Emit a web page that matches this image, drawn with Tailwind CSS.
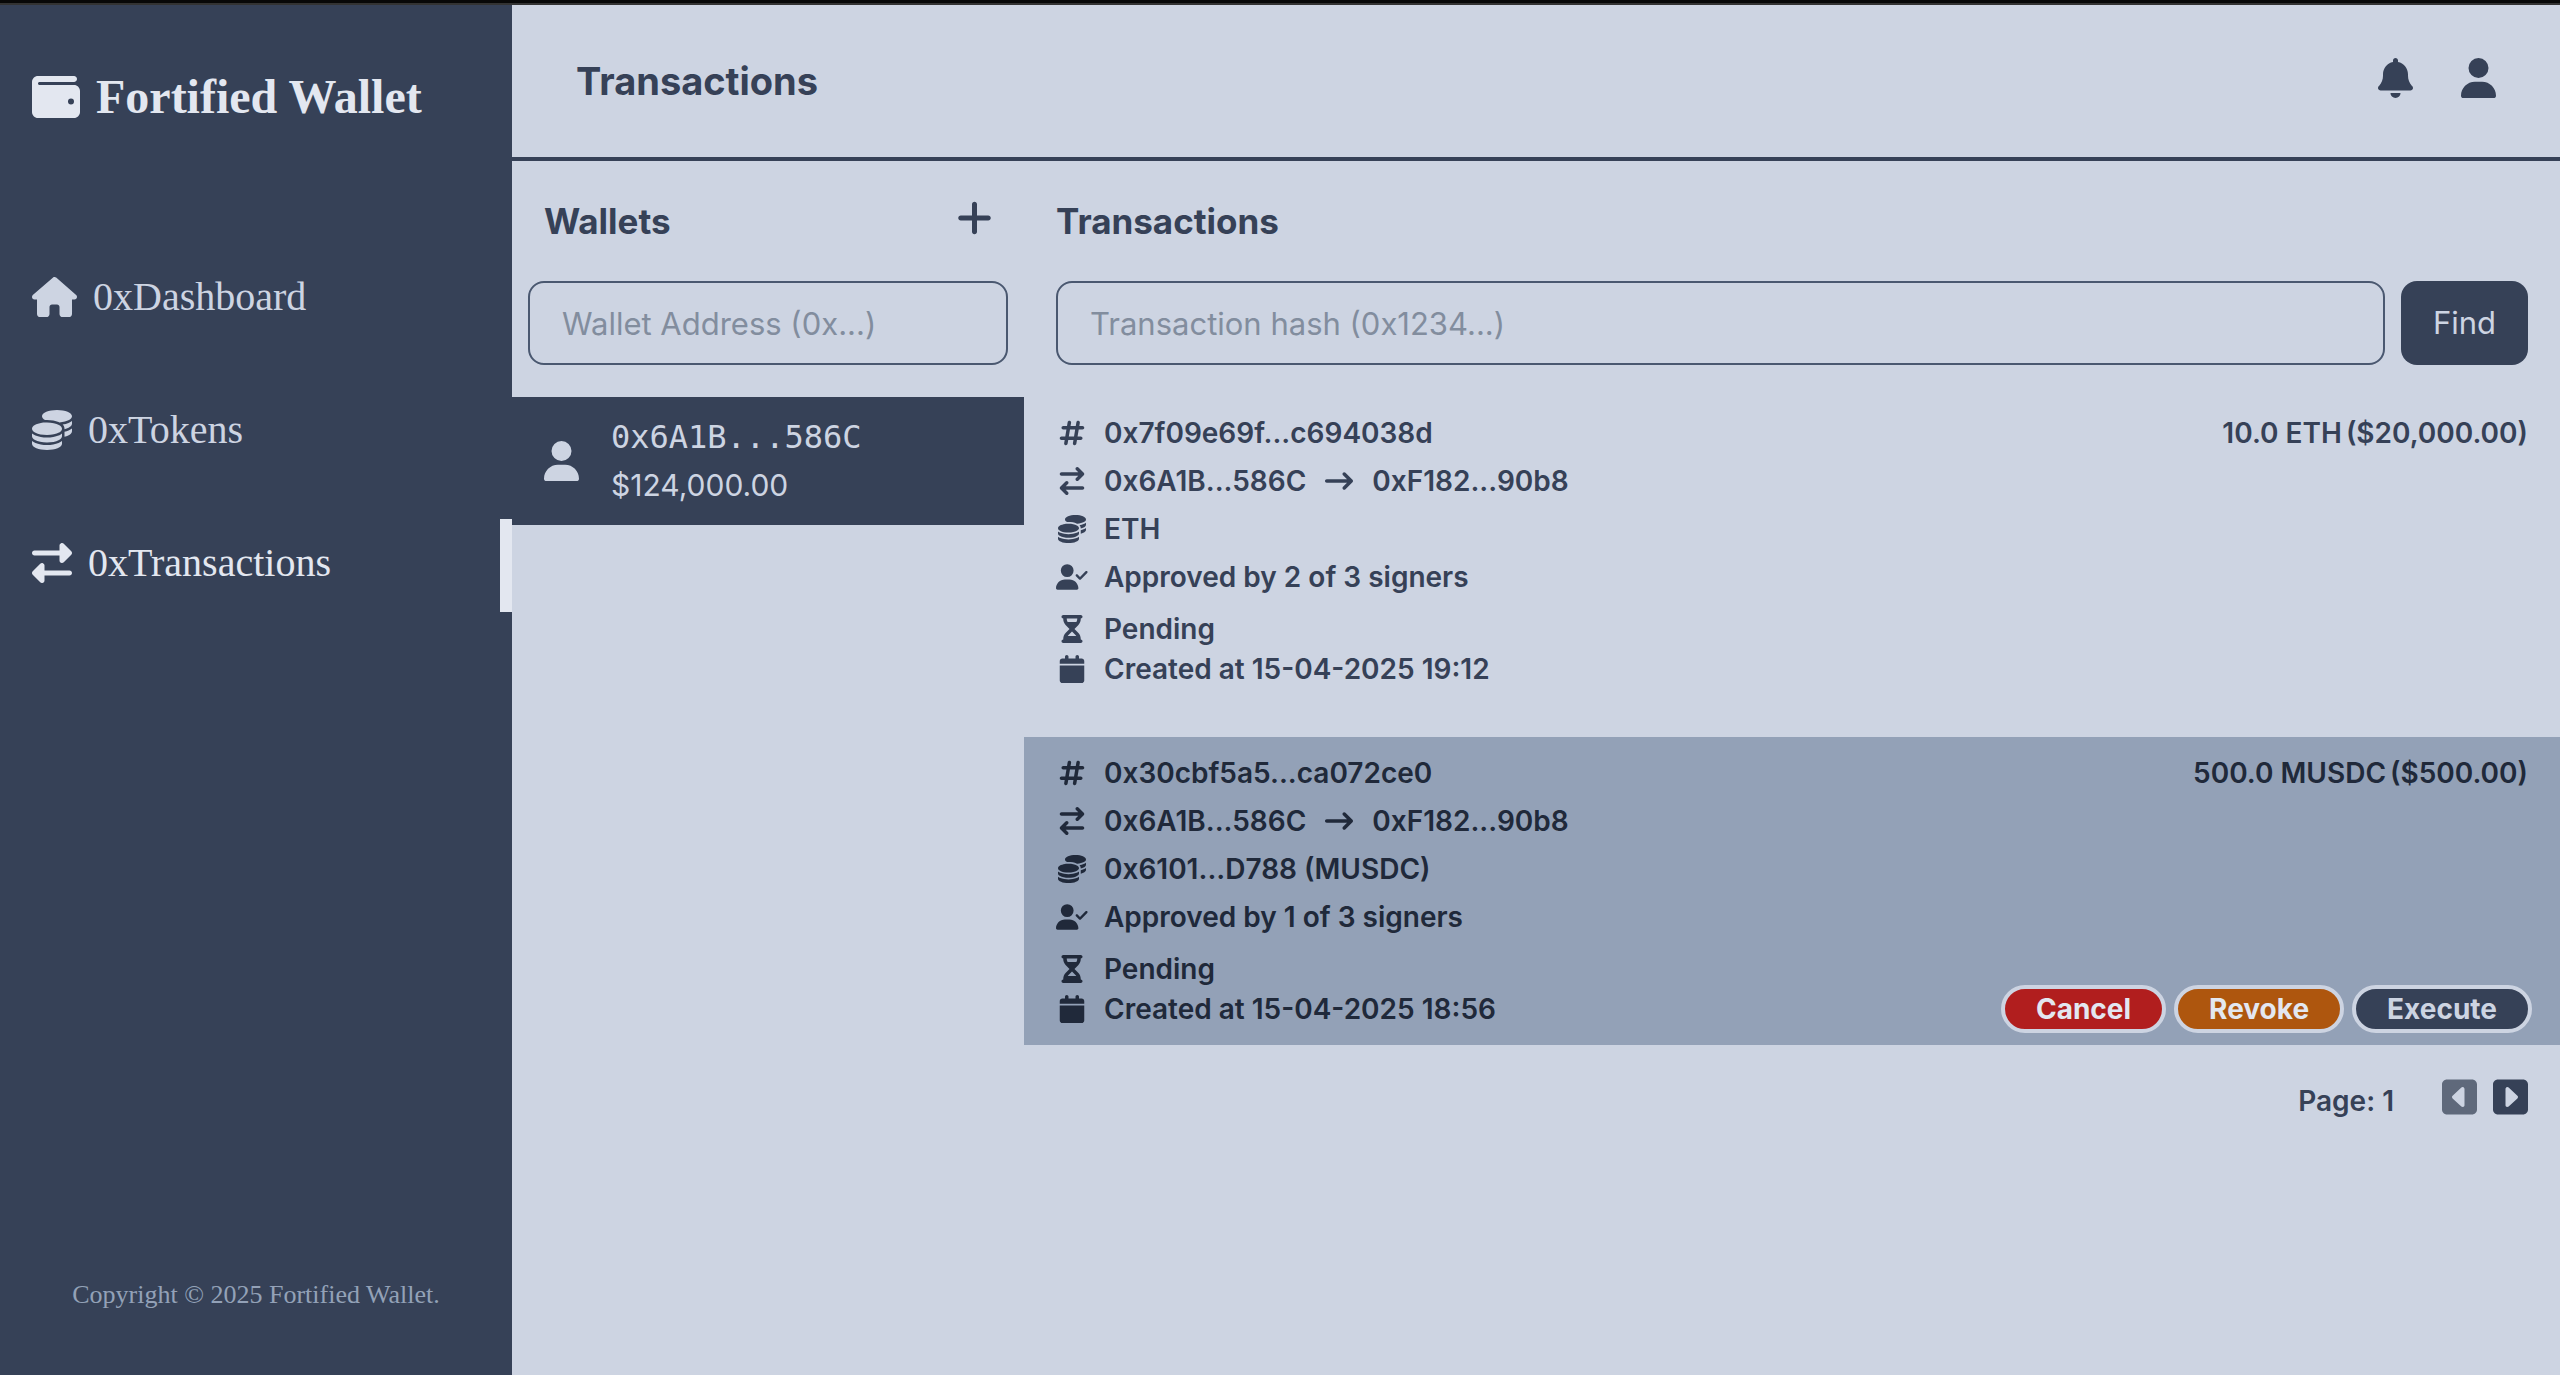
<!DOCTYPE html>
<html lang="en">
<head>
<meta charset="utf-8">
<meta name="viewport" content="width=device-width, initial-scale=1">
<title>Fortified Wallet</title>
<script src="https://cdn.jsdelivr.net/npm/@tailwindcss/browser@4"></script>
</head>
<body class="flex min-h-screen flex-col bg-[#cdd4e2] font-['Inter',sans-serif] text-[#364157]">

<svg class="hidden" aria-hidden="true">
  <symbol id="wallet" viewBox="0 0 512 512"><path d="M64 32C28.7 32 0 60.7 0 96V416c0 35.3 28.7 64 64 64H448c35.3 0 64-28.7 64-64V192c0-35.3-28.7-64-64-64H80c-8.8 0-16-7.2-16-16s7.2-16 16-16H448c17.7 0 32-14.3 32-32s-14.3-32-32-32H64zM416 272a32 32 0 1 1 0 64 32 32 0 1 1 0-64z"/></symbol>
  <symbol id="house" viewBox="0 0 576 512"><path d="M575.8 255.5c0 18-15 32.1-32 32.1h-32l.7 160.2c0 2.7-.2 5.4-.5 8.1V472c0 22.1-17.9 40-40 40H456c-1.1 0-2.2 0-3.3-.1c-1.4 .1-2.8 .1-4.2 .1H416 392c-22.1 0-40-17.9-40-40V448 384c0-17.7-14.3-32-32-32H256c-17.7 0-32 14.3-32 32v64 24c0 22.1-17.9 40-40 40H160 128.1c-1.5 0-3-.1-4.5-.2c-1.2 .1-2.4 .2-3.6 .2H104c-22.1 0-40-17.9-40-40V360c0-.9 0-1.9 .1-2.8V287.6H32c-18 0-32-14-32-32.1c0-9 3-17 10-24L266.4 8c7-7 15-8 22-8s15 2 21 7L564.8 231.5c8 7 12 15 11 24z"/></symbol>
  <symbol id="coins" viewBox="0 0 512 512"><path d="M512 80c0 18-14.3 34.6-38.4 48c-29.1 16.1-72.5 27.5-122.3 30.9c-3.7-1.8-7.4-3.5-11.3-5C300.6 137.4 248.2 128 192 128c-8.3 0-16.4 .2-24.5 .6l-1.1-.6C142.3 114.6 128 98 128 80c0-44.2 86-80 192-80S512 35.8 512 80zM160.7 161.1c10.2-.7 20.7-1.1 31.3-1.1c62.2 0 117.4 12.3 152.5 31.4C369.3 204.9 384 221.7 384 240c0 4-.7 7.9-2.1 11.7c-4.6 13.2-17 25.3-35 35.5c-.1 .1-.3 .1-.4 .2c-.3 .2-.6 .3-.9 .5c-35 19.4-90.8 32-153.6 32c-59.6 0-112.9-11.3-148.2-29.1c-1.9-.9-3.7-1.9-5.5-2.9C14.3 274.6 0 258 0 240c0-34.8 53.4-64.5 128-75.4c10.5-1.5 21.4-2.7 32.7-3.5zM416 240c0-21.9-10.6-39.9-24.1-53.4c28.3-4.4 54.2-11.4 76.2-20.5c16.3-6.8 31.5-15.2 43.9-25.5V176c0 19.3-16.5 37.1-43.8 50.9c-14.6 7.4-32.4 13.7-52.4 18.5c.1-1.8 .2-3.5 .2-5.3zm-32 96c0 18-14.3 34.6-38.4 48c-1.8 1-3.6 1.9-5.5 2.9C304.9 404.7 251.6 416 192 416c-62.8 0-118.6-12.6-153.6-32C14.3 370.6 0 354 0 336V300.6c12.5 10.3 27.6 18.7 43.9 25.5C83.4 342.6 135.8 352 192 352s108.6-9.4 148.1-25.9c7.8-3.2 15.3-6.9 22.4-10.9c6.1-3.4 11.8-7.2 17.2-11.2c1.5-1.1 2.9-2.3 4.3-3.4V304v5.7V336zm32 0V304 278.1c19-4.2 36.5-9.5 52.1-16c16.3-6.8 31.5-15.2 43.9-25.5V272c0 10.5-5 21-14.9 30.9c-16.3 16.3-45 29.7-81.3 38.4c.1-1.7 .2-3.5 .2-5.3zM192 448c56.2 0 108.6-9.4 148.1-25.9c16.3-6.8 31.5-15.2 43.9-25.5V432c0 44.2-86 80-192 80S0 476.2 0 432V396.6c12.5 10.3 27.6 18.7 43.9 25.5C83.4 438.6 135.8 448 192 448z"/></symbol>
  <symbol id="right-left" viewBox="0 0 512 512"><path d="M32 96l320 0V32c0-12.9 7.8-24.6 19.8-29.6s25.7-2.2 34.9 6.9l96 96c6 6 9.4 14.1 9.4 22.6s-3.4 16.6-9.4 22.6l-96 96c-9.2 9.2-22.9 11.9-34.9 6.9s-19.8-16.6-19.8-29.6V160L32 160c-17.7 0-32-14.3-32-32s14.3-32 32-32zM480 352c17.7 0 32 14.3 32 32s-14.3 32-32 32H160v64c0 12.9-7.8 24.6-19.8 29.6s-25.7 2.2-34.9-6.9l-96-96c-6-6-9.4-14.1-9.4-22.6s3.4-16.6 9.4-22.6l96-96c9.2-9.2 22.9-11.9 34.9-6.9s19.8 16.6 19.8 29.6l0 64H480z"/></symbol>
  <symbol id="swap" viewBox="0 0 448 512"><path d="M438.6 150.6c12.5-12.5 12.5-32.8 0-45.3l-96-96c-12.5-12.5-32.8-12.5-45.3 0s-12.5 32.8 0 45.3L338.7 96 32 96C14.3 96 0 110.3 0 128s14.3 32 32 32l306.7 0-41.4 41.4c-12.5 12.5-12.5 32.8 0 45.3s32.8 12.5 45.3 0l96-96zm-333.3 352c12.5 12.5 32.8 12.5 45.3 0s12.5-32.8 0-45.3L109.3 416 416 416c17.7 0 32-14.3 32-32s-14.3-32-32-32l-306.7 0 41.4-41.4c12.5-12.5 12.5-32.8 0-45.3s-32.8-12.5-45.3 0l-96 96c-12.5 12.5-12.5 32.8 0 45.3l96 96z"/></symbol>
  <symbol id="hash" viewBox="0 0 448 512"><path d="M181.3 32.4c17.4 2.9 29.2 19.4 26.3 36.8L197.8 128h95.1l11.5-69.3c2.9-17.4 19.4-29.2 36.8-26.3s29.2 19.4 26.3 36.8L357.8 128H416c17.7 0 32 14.3 32 32s-14.3 32-32 32H347.1L325.8 320H384c17.7 0 32 14.3 32 32s-14.3 32-32 32H315.1l-11.5 69.3c-2.9 17.4-19.4 29.2-36.8 26.3s-29.2-19.4-26.3-36.8l9.8-58.7H155.1l-11.5 69.3c-2.9 17.4-19.4 29.2-36.8 26.3s-29.2-19.4-26.3-36.8L90.2 384H32c-17.7 0-32-14.3-32-32s14.3-32 32-32h68.9l21.3-128H64c-17.7 0-32-14.3-32-32s14.3-32 32-32h68.9l11.5-69.3c2.9-17.4 19.4-29.2 36.8-26.3zM187.1 192L165.8 320h95.1l21.3-128H187.1z"/></symbol>
  <symbol id="plus" viewBox="0 0 448 512"><path d="M256 80c0-17.7-14.3-32-32-32s-32 14.3-32 32V224H48c-17.7 0-32 14.3-32 32s14.3 32 32 32H192V432c0 17.7 14.3 32 32 32s32-14.3 32-32V288H400c17.7 0 32-14.3 32-32s-14.3-32-32-32H256V80z"/></symbol>
  <symbol id="bell" viewBox="0 0 448 512"><path d="M224 0c-17.7 0-32 14.3-32 32V51.2C119 66 64 130.6 64 208v18.8c0 47-17.3 92.4-48.5 127.6l-7.4 8.3c-8.4 9.4-10.4 22.9-5.3 34.4S19.4 416 32 416H416c12.6 0 24-7.4 29.2-18.9s3.1-25-5.3-34.4l-7.4-8.3C401.3 319.2 384 273.9 384 226.8V208c0-77.4-55-142-128-156.8V32c0-17.7-14.3-32-32-32zm45.3 493.3c12-12 18.7-28.3 18.7-45.3H224 160c0 17 6.7 33.3 18.7 45.3s28.3 18.7 45.3 18.7s33.3-6.7 45.3-18.7z"/></symbol>
  <symbol id="user" viewBox="0 0 448 512"><path d="M224 256A128 128 0 1 0 224 0a128 128 0 1 0 0 256zm-45.7 48C79.8 304 0 383.8 0 482.3C0 498.7 13.3 512 29.7 512H418.3c16.4 0 29.7-13.3 29.7-29.7C448 383.8 368.2 304 269.7 304H178.3z"/></symbol>
  <symbol id="user-check" viewBox="0 0 640 512"><path d="M96 128a128 128 0 1 1 256 0A128 128 0 1 1 96 128zM0 482.3C0 383.8 79.8 304 178.3 304h91.4C368.2 304 448 383.8 448 482.3c0 16.4-13.3 29.7-29.7 29.7H29.7C13.3 512 0 498.7 0 482.3zM625 177L497 305c-9.4 9.4-24.6 9.4-33.9 0l-64-64c-9.4-9.4-9.4-24.6 0-33.9s24.6-9.4 33.9 0l47 47L591 143c9.4-9.4 24.6-9.4 33.9 0s9.4 24.6 0 33.9z"/></symbol>
  <symbol id="hourglass" viewBox="0 0 384 512"><path d="M32 0C14.3 0 0 14.3 0 32S14.3 64 32 64V75c0 42.4 16.9 83.1 46.9 113.1L146.7 256 78.9 323.9C48.9 353.9 32 394.6 32 437v11c-17.7 0-32 14.3-32 32s14.3 32 32 32H64 320h32c17.7 0 32-14.3 32-32s-14.3-32-32-32V437c0-42.4-16.9-83.1-46.9-113.1L237.3 256l67.9-67.9c30-30 46.9-70.7 46.9-113.1V64c17.7 0 32-14.3 32-32s-14.3-32-32-32H320 64 32zM96 75V64H288V75c0 19-5.6 37.4-16 53H112c-10.3-15.6-16-34-16-53zm16 309c3.5-5.3 7.6-10.3 12.1-14.9L192 301.3l67.9 67.9c4.6 4.6 8.6 9.6 12.1 14.9H112z"/></symbol>
  <symbol id="calendar" viewBox="0 0 448 512"><path d="M96 32V64H48C21.5 64 0 85.5 0 112v48H448V112c0-26.5-21.5-48-48-48H352V32c0-17.7-14.3-32-32-32s-32 14.3-32 32V64H160V32c0-17.7-14.3-32-32-32S96 14.3 96 32zM448 192H0V464c0 26.5 21.5 48 48 48H400c26.5 0 48-21.5 48-48V192z"/></symbol>
  <symbol id="arrow" viewBox="0 0 512 512"><path d="M502.6 278.6c12.5-12.5 12.5-32.8 0-45.3l-128-128c-12.5-12.5-32.8-12.5-45.3 0s-12.5 32.8 0 45.3L402.7 224 32 224c-17.7 0-32 14.3-32 32s14.3 32 32 32l370.7 0-73.4 73.4c-12.5 12.5-12.5 32.8 0 45.3s32.8 12.5 45.3 0l128-128z"/></symbol>
  <symbol id="caret-left" viewBox="0 0 448 512"><path fill-rule="evenodd" d="M0 96C0 60.7 28.7 32 64 32H384c35.3 0 64 28.7 64 64V416c0 35.3-28.7 64-64 64H64c-35.3 0-64-28.7-64-64V96zM128 256c0 6.7 2.8 13 7.7 17.6l112 104c7 6.5 17.2 8.2 25.9 4.4s14.4-12.5 14.4-22V152c0-9.5-5.7-18.2-14.4-22s-18.9-2.1-25.9 4.4l-112 104c-4.9 4.5-7.7 10.9-7.7 17.6z"/></symbol>
  <symbol id="caret-right" viewBox="0 0 448 512"><path fill-rule="evenodd" d="M448 96c0-35.3-28.7-64-64-64H64C28.7 32 0 60.7 0 96V416c0 35.3 28.7 64 64 64H384c35.3 0 64-28.7 64-64V96zM320 256c0 6.7-2.8 13-7.7 17.6l-112 104c-7 6.5-17.2 8.2-25.9 4.4s-14.4-12.5-14.4-22V152c0-9.5 5.7-18.2 14.4-22s18.9-2.1 25.9 4.4l112 104c4.9 4.5 7.7 10.9 7.7 17.6z"/></symbol>
</svg>

<div class="h-[5px] border-b-2 border-[#333333] bg-[#080808]"></div>

<div class="flex flex-1">
  <aside class="flex w-1/5 flex-col bg-[#364157] font-['Liberation_Serif',serif] text-[#cdd4e2]">
    <a href="#" class="mt-16 flex items-center gap-4 pl-8 text-[#e3e7f0]">
      <svg class="size-12 fill-current"><use href="#wallet"/></svg>
      <span class="text-[48px] leading-14 font-bold whitespace-nowrap">Fortified Wallet</span>
    </a>
    <nav class="mt-32 flex flex-col gap-10 text-[40px] leading-12">
      <a href="#" class="flex items-center gap-4 pt-5 pb-[25px] pl-8">
        <svg class="h-10 w-[45px] fill-current"><use href="#house"/></svg>
        <span>0xDashboard</span>
      </a>
      <a href="#" class="flex items-center gap-4 pt-5 pb-[25px] pl-8">
        <svg class="size-10 fill-current"><use href="#coins"/></svg>
        <span>0xTokens</span>
      </a>
      <a href="#" aria-current="page" class="flex items-center gap-4 border-r-[12px] border-[#e3e7f0] pt-5 pb-[25px] pl-8 text-[#e3e7f0]">
        <svg class="size-10 fill-current"><use href="#right-left"/></svg>
        <span>0xTransactions</span>
      </a>
    </nav>
    <p class="mt-auto pb-15 text-center text-[26px] leading-10 text-[#93a1b7]">Copyright © 2025 Fortified Wallet.</p>
  </aside>

  <div class="flex flex-1 flex-col">
    <header class="flex h-[156px] items-center justify-between border-b-4 border-[#364157] px-16">
      <h1 class="text-[38px] leading-12 font-bold">Transactions</h1>
      <div class="flex gap-12 pb-1.5">
        <button aria-label="Notifications"><svg class="h-10 w-[35px] fill-current"><use href="#bell"/></svg></button>
        <button aria-label="Account"><svg class="h-10 w-[35px] fill-current"><use href="#user"/></svg></button>
      </div>
    </header>

    <main class="flex flex-1">
      <section class="w-1/4">
        <div class="flex items-center justify-between px-8 py-10">
          <h2 class="text-[35px] leading-10 font-bold">Wallets</h2>
          <button aria-label="Add wallet" class="-mt-1.5"><svg class="h-10 w-[35px] fill-current"><use href="#plus"/></svg></button>
        </div>
        <div class="px-4">
          <input type="text" aria-label="Wallet address" placeholder="Wallet Address (0x...)" class="h-21 w-full rounded-2xl border-2 border-[#4a5870] px-8 text-[31px] placeholder:text-[#828d9e]">
        </div>
        <a href="#" class="mt-8 flex items-center gap-8 bg-[#364157] px-8 py-4 text-[#cdd4e2]">
          <svg class="h-10 w-[35px] fill-current"><use href="#user"/></svg>
          <span class="flex flex-col leading-12">
            <span class="font-['DejaVu_Sans_Mono',monospace] text-[32px]">0x6A1B...586C</span>
            <span class="text-[30px]">$124,000.00</span>
          </span>
        </a>
      </section>

      <section class="flex-1">
        <h2 class="px-8 py-10 text-[35px] leading-10 font-bold">Transactions</h2>
        <form class="flex gap-4 px-8 text-[31px]">
          <input type="text" aria-label="Transaction hash" placeholder="Transaction hash (0x1234...)" class="h-21 flex-1 rounded-2xl border-2 border-[#4a5870] px-8 placeholder:text-[#828d9e]">
          <button type="button" class="rounded-2xl bg-[#364157] px-8 text-[#cdd4e2]">Find</button>
        </form>

        <div class="mt-8 flex flex-col gap-8 text-[28px] leading-10 font-semibold">
          <article class="flex flex-col px-8 py-4">
            <div class="flex items-center gap-4">
              <svg class="h-7 w-8 fill-current"><use href="#hash"/></svg>
              <span>0x7f09e69f...c694038d</span>
              <span class="ml-auto flex gap-1"><span>10.0 ETH</span><span>($20,000.00)</span></span>
            </div>
            <div class="mt-2 flex items-center gap-4">
              <svg class="h-7 w-8 fill-current"><use href="#swap"/></svg>
              <span class="flex items-center gap-[19px]">0x6A1B...586C <svg class="size-7 fill-current"><use href="#arrow"/></svg> 0xF182...90b8</span>
            </div>
            <div class="mt-2 flex items-center gap-4">
              <svg class="h-7 w-8 fill-current"><use href="#coins"/></svg>
              <span>ETH</span>
            </div>
            <div class="mt-2 flex items-center gap-4">
              <svg class="h-7 w-8 fill-current"><use href="#user-check"/></svg>
              <span>Approved by 2 of 3 signers</span>
            </div>
            <div class="mt-3 flex items-center gap-4">
              <svg class="h-7 w-8 fill-current"><use href="#hourglass"/></svg>
              <span>Pending</span>
            </div>
            <div class="flex items-center gap-4">
              <svg class="h-7 w-8 fill-current"><use href="#calendar"/></svg>
              <span>Created at 15-04-2025 19:12</span>
            </div>
          </article>

          <article class="flex flex-col bg-[#93a1b7] px-8 py-4 text-[#20293a]">
            <div class="flex items-center gap-4">
              <svg class="h-7 w-8 fill-current"><use href="#hash"/></svg>
              <span>0x30cbf5a5...ca072ce0</span>
              <span class="ml-auto flex gap-1"><span>500.0 MUSDC</span><span>($500.00)</span></span>
            </div>
            <div class="mt-2 flex items-center gap-4">
              <svg class="h-7 w-8 fill-current"><use href="#swap"/></svg>
              <span class="flex items-center gap-[19px]">0x6A1B...586C <svg class="size-7 fill-current"><use href="#arrow"/></svg> 0xF182...90b8</span>
            </div>
            <div class="mt-2 flex items-center gap-4">
              <svg class="h-7 w-8 fill-current"><use href="#coins"/></svg>
              <span>0x6101...D788 (MUSDC)</span>
            </div>
            <div class="mt-2 flex items-center gap-4">
              <svg class="h-7 w-8 fill-current"><use href="#user-check"/></svg>
              <span>Approved by 1 of 3 signers</span>
            </div>
            <div class="mt-3 flex items-center gap-4">
              <svg class="h-7 w-8 fill-current"><use href="#hourglass"/></svg>
              <span>Pending</span>
            </div>
            <div class="flex h-10 items-center gap-4">
              <svg class="h-7 w-8 fill-current"><use href="#calendar"/></svg>
              <span>Created at 15-04-2025 18:56</span>
              <div class="-mr-1 ml-auto flex gap-2 font-bold text-[#e3e7f0]">
                <button class="rounded-full border-4 border-[#cdd4e2] bg-[#b11e1e] px-[31px]">Cancel</button>
                <button class="rounded-full border-4 border-[#cdd4e2] bg-[#ae560e] px-[31px]">Revoke</button>
                <button class="rounded-full border-4 border-[#cdd4e2] bg-[#364157] px-[31px] text-[#cdd4e2]">Execute</button>
              </div>
            </div>
          </article>
        </div>

        <div class="mt-8 flex items-start justify-end gap-4 px-8">
          <span class="mr-8 pt-1 text-[28px] leading-10 font-semibold">Page: 1</span>
          <button aria-label="Previous page" disabled class="text-[#5f697b]"><svg class="h-10 w-[35px] fill-current"><use href="#caret-left"/></svg></button>
          <button aria-label="Next page"><svg class="h-10 w-[35px] fill-current"><use href="#caret-right"/></svg></button>
        </div>
      </section>
    </main>
  </div>
</div>
</body>
</html>
